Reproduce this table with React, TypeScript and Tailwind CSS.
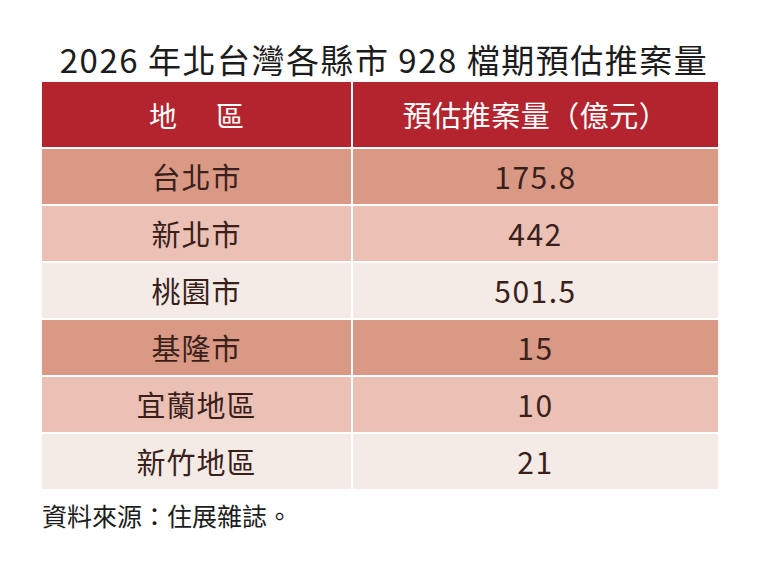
const font = { fontFamily: '"Noto Sans CJK TC", "Noto Sans", sans-serif' };

interface Row {
  area: string;
  amount: string;
  tone: string;
}

const rows: Row[] = [
  { area: '台北市', amount: '175.8', tone: 'bg-[#d99985]' },
  { area: '新北市', amount: '442', tone: 'bg-[#eac1b4]' },
  { area: '桃園市', amount: '501.5', tone: 'bg-[#f4ebe6]' },
  { area: '基隆市', amount: '15', tone: 'bg-[#d99985]' },
  { area: '宜蘭地區', amount: '10', tone: 'bg-[#eac1b4]' },
  { area: '新竹地區', amount: '21', tone: 'bg-[#f4ebe6]' },
];

export default function App() {
  return (
    <div className="w-[768px] h-[564px] bg-white text-[#1c1c1c] overflow-hidden" style={font}>
      <h1 className="pt-[40px] mb-[4px] text-center text-[33px] leading-[38px] tracking-[1.5px] font-normal">
        2026 年北台灣各縣市 928 檔期預估推案量
      </h1>

      <div className="ml-[42px] w-[676px] grid grid-cols-[309px_365px] gap-x-[2px] gap-y-[2px]">
        <div className="h-[65px] bg-[#b3242f] text-white text-[28px] flex items-center justify-center gap-[39px]">
          <span>地</span>
          <span>區</span>
        </div>
        <div className="h-[65px] bg-[#b3242f] text-white text-[29px] tracking-[0.5px] flex items-center justify-center">
          預估推案量（億元）
        </div>

        {rows.map((row) => (
          <div key={row.area} className="contents">
            <div className={`h-[55px] ${row.tone} text-[#3a1f1b] text-[29px] tracking-[1px] flex items-center justify-center`}>
              {row.area}
            </div>
            <div className={`h-[55px] ${row.tone} text-[#3a1f1b] text-[30px] tracking-[1.5px] flex items-center justify-center`}>
              {row.amount}
            </div>
          </div>
        ))}
      </div>

      <p className="ml-[42px] mt-[11px] text-[25px] leading-[30px] text-[#1c1c1c]">資料來源：住展雜誌。</p>
    </div>
  );
}
